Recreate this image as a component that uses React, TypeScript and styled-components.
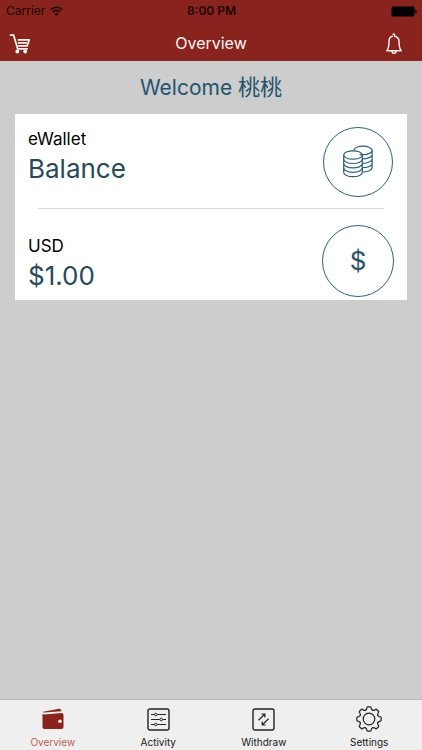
import React from 'react';
import styled, { createGlobalStyle } from 'styled-components';

const GlobalStyle = createGlobalStyle`
  *, *::before, *::after { box-sizing: border-box; }
  body {
    margin: 0;
    background: #cdcdcd;
    color: #080808;
    font-family: Inter, "Noto Sans CJK SC", sans-serif;
  }
  button { font: inherit; color: inherit; border: 0; background: none; padding: 0; cursor: pointer; }
  h1, h2, p { margin: 0; font-weight: 400; }
  svg { display: block; }
`;

const Screen = styled.div`
  min-height: 100vh;
  display: flex;
  flex-direction: column;
`;

const Header = styled.header`
  background: #89231d;
`;

const StatusBar = styled.div`
  display: grid;
  grid-template-columns: 1fr auto 1fr;
  align-items: center;
  height: 22px;
  padding: 0 5px 0 6px;
  font-size: 12px;
  line-height: 16px;
  color: #1c0503;
`;

const Carrier = styled.span`
  display: flex;
  align-items: center;
  gap: 5px;
`;

const Clock = styled.time`
  font-weight: 600;
`;

const Battery = styled.span`
  justify-self: end;
`;

const NavBar = styled.div`
  display: grid;
  grid-template-columns: 1fr auto 1fr;
  align-items: center;
  height: 39px;
  padding: 0 9px;
  color: #fff5f2;
`;

const NavTitle = styled.h1`
  padding-top: 2px;
  font-size: 16px;
  line-height: 24px;
`;

const NavButton = styled.button<{ $end?: boolean }>`
  justify-self: ${(p) => (p.$end ? 'end' : 'start')};
  margin-right: ${(p) => (p.$end ? '11px' : '0')};
  padding-top: 4px;
`;

const Main = styled.main`
  flex: 1;
  padding: 10px 15px;
`;

const Welcome = styled.h2`
  font-size: 21px;
  line-height: 32px;
  text-align: center;
  color: #24536d;
`;

const UserName = styled.span`
  font-size: 22px;
`;

const Card = styled.section`
  margin-top: 10px;
  background: #fff;
`;

const Row = styled.div<{ $last?: boolean }>`
  display: flex;
  justify-content: space-between;
  align-items: flex-start;
  padding: ${(p) => (p.$last ? '16px 13px 3px' : '13px 13px 11px')};
`;

const RowText = styled.div<{ $last?: boolean }>`
  padding-top: ${(p) => (p.$last ? '9px' : '0')};
`;

const Caption = styled.p`
  font-size: 17px;
  line-height: 24px;
  color: #000;
`;

const Figure = styled.p`
  font-size: 26px;
  line-height: 36px;
  color: #27495a;
`;

const Ring = styled.span<{ $size: number }>`
  display: flex;
  align-items: center;
  justify-content: center;
  width: ${(p) => p.$size}px;
  height: ${(p) => p.$size}px;
  margin-right: ${(p) => (p.$size > 70 ? 0 : 1)}px;
  border: 1px solid #2b617b;
  border-radius: 50%;
  font-size: 26px;
  line-height: 36px;
  color: #2c5368;
`;

const Divider = styled.hr`
  margin: 0 23px;
  border: 0;
  border-top: 1px solid #d9d9d9;
`;

const TabBar = styled.nav`
  display: grid;
  grid-template-columns: repeat(4, 1fr);
  height: 51px;
  border-top: 1px solid #bababa;
  background: #efefef;
`;

const Tab = styled.button<{ $active?: boolean }>`
  && { color: ${(p) => (p.$active ? '#b95f5a' : '#181818')}; }
  display: flex;
  flex-direction: column;
  align-items: center;
  padding-top: 5px;
  font-size: 10px;
  line-height: 14px;
`;

const TabIcon = styled.span`
  display: flex;
  align-items: center;
  height: 28px;
  margin-bottom: 2px;
`;

const WifiIcon = () => (
  <svg width="13" height="10" viewBox="0 0 13 10" fill="none" stroke="currentColor" strokeWidth="1.6" aria-hidden="true">
    <path d="M.7 3.6a8.3 8.3 0 0 1 11.6 0M2.7 5.9a5.4 5.4 0 0 1 7.6 0" />
    <path d="M4.4 7.7a3 3 0 0 1 4.2 0L6.5 9.8z" fill="currentColor" stroke="none" />
  </svg>
);

const BatteryIcon = () => (
  <svg width="26" height="11" viewBox="0 0 26 11" aria-label="Battery full" role="img">
    <rect x="0.5" y="0.5" width="23" height="10" rx="1.5" fill="#000" />
    <path d="M24.2 3.8q1.6.3 1.6 1.7t-1.6 1.7z" fill="#000" />
  </svg>
);

const CartIcon = () => (
  <svg width="22" height="20" viewBox="0 0 22 20" fill="none" stroke="currentColor" strokeWidth="1.7" strokeLinecap="round" strokeLinejoin="round" aria-hidden="true">
    <path d="M1.5 1.2h3.2L8.6 14.8h9.6" />
    <path d="M9.3 5.9h10.9L18.2 11.8H9.5M9.5 8.9h7.7" />
    <circle cx="8.3" cy="17.5" r="1.9" fill="currentColor" stroke="none" />
    <circle cx="16.2" cy="17.5" r="1.9" fill="currentColor" stroke="none" />
  </svg>
);

const BellIcon = () => (
  <svg width="16" height="22" viewBox="0 0 16 22" fill="none" stroke="currentColor" strokeWidth="1.4" strokeLinecap="round" strokeLinejoin="round" aria-hidden="true">
    <path d="M7.2 1.2q1-.6 1.4.6v1.4c2.9.5 4.4 2.5 4.4 5.1 0 4.5.3 7.3 2.2 9.5H.8C2.7 15.6 3 12.8 3 8.3 3 5.7 4.2 3.8 6.4 3.2" />
    <path d="M6 18.2q0 2 2 2t2-2" />
  </svg>
);

const CoinsIcon = () => (
  <svg width="30" height="34" viewBox="0 0 30 34" fill="none" stroke="#2b617b" strokeWidth="1.2" aria-hidden="true">
    <ellipse cx="10" cy="10" rx="9.3" ry="4.2" />
    <path d="M.7 10v17.5c0 2.3 4.1 4.2 9.3 4.2s9.3-1.9 9.3-4.2V10" />
    <path d="M.7 14.3c0 2.3 4.1 4.2 9.3 4.2s9.3-1.9 9.3-4.2M.7 18.7c0 2.3 4.1 4.2 9.3 4.2s9.3-1.9 9.3-4.2M.7 23.1c0 2.3 4.1 4.2 9.3 4.2s9.3-1.9 9.3-4.2" />
    <path d="M10.9 5.3C11.4 3 15.2 1.2 19.9 1.2c5.1 0 9.2 1.9 9.2 4.2s-4.1 4.2-9.2 4.2q-1.7 0-3.2-.3" />
    <path d="M29.1 5.4v17.4c0 2.3-4.1 4.2-9.7 4.2M29.1 9.7c0 2.3-4.1 4.2-9.7 4.2M29.1 14.1c0 2.3-4.1 4.2-9.7 4.2M29.1 18.5c0 2.3-4.1 4.2-9.7 4.2" />
  </svg>
);

const WalletIcon = () => (
  <svg width="22" height="22" viewBox="0 0 22 22" fill="#89231d" aria-hidden="true">
    <path d="M1 3.7 17.2.8q1.5-.1 1.8 1.3l.3 1.2L2 4.5Q.5 4.6 1 3.7z" />
    <path d="M.5 6q1 .5 2 .4L19.5 5q2 .1 2 2v11.900q0 2-2 2h-17q-2 0-2-2z" />
    <circle cx="18" cy="13.3" r="1.8" fill="#efefef" />
  </svg>
);

const SlidersIcon = () => (
  <svg width="23" height="23" viewBox="0 0 23 23" fill="none" stroke="#242424" aria-hidden="true">
    <rect x="1" y="1" width="21" height="21" rx="2" strokeWidth="1.4" />
    <path d="M4 6.5h3.3M10.2 6.5H19M4 11.5h8.8M15.7 11.5H19M4 16.5h3.3M10.2 16.5H19" />
    <circle cx="8.75" cy="6.5" r="1.3" />
    <circle cx="14.25" cy="11.5" r="1.3" />
    <circle cx="8.75" cy="16.5" r="1.3" />
  </svg>
);

const TransferIcon = () => (
  <svg width="23" height="23" viewBox="0 0 23 23" fill="none" stroke="#242424" aria-hidden="true">
    <rect x="1" y="1" width="21" height="21" rx="2" strokeWidth="1.4" />
    <path d="M6.5 12.2 12.8 6M9.5 6h3.4v3.4M16.5 10.8 10.2 17M10.2 13.6V17h3.4" strokeWidth="1.2" />
  </svg>
);

const TOOTH = 'M-4.1 -8.5Q-2.5 -9.1 -2.3 -10.4Q-2.2 -12.2 -1.3 -12.2H1.3Q2.2 -12.2 2.3 -10.4Q2.5 -9.1 4.1 -8.5';

const GearIcon = () => (
  <svg width="26" height="26" viewBox="-13 -13 26 26" fill="none" stroke="#242424" strokeWidth="1.2" strokeLinejoin="round" aria-hidden="true">
    {[0, 45, 90, 135, 180, 225, 270, 315].map((angle) => (
      <path key={angle} d={TOOTH} transform={`rotate(${angle})`} />
    ))}
    <circle r="5.8" />
  </svg>
);

const TABS = [
  { label: 'Overview', Icon: WalletIcon },
  { label: 'Activity', Icon: SlidersIcon },
  { label: 'Withdraw', Icon: TransferIcon },
  { label: 'Settings', Icon: GearIcon },
];

export default function App() {
  return (
    <Screen>
      <GlobalStyle />
      <Header>
        <StatusBar>
          <Carrier>Carrier <WifiIcon /></Carrier>
          <Clock>8:00 PM</Clock>
          <Battery><BatteryIcon /></Battery>
        </StatusBar>
        <NavBar>
          <NavButton type="button" aria-label="Cart"><CartIcon /></NavButton>
          <NavTitle>Overview</NavTitle>
          <NavButton type="button" aria-label="Notifications" $end><BellIcon /></NavButton>
        </NavBar>
      </Header>
      <Main>
        <Welcome>Welcome <UserName>桃桃</UserName></Welcome>
        <Card>
          <Row>
            <RowText>
              <Caption>eWallet</Caption>
              <Figure>Balance</Figure>
            </RowText>
            <Ring $size={70}><CoinsIcon /></Ring>
          </Row>
          <Divider />
          <Row $last>
            <RowText $last>
              <Caption>USD</Caption>
              <Figure>$1.00</Figure>
            </RowText>
            <Ring $size={72}>$</Ring>
          </Row>
        </Card>
      </Main>
      <TabBar aria-label="Main">
        {TABS.map(({ label, Icon }, i) => (
          <Tab key={label} type="button" $active={i === 0} aria-current={i === 0 ? 'page' : undefined}>
            <TabIcon><Icon /></TabIcon>
            {label}
          </Tab>
        ))}
      </TabBar>
    </Screen>
  );
}
